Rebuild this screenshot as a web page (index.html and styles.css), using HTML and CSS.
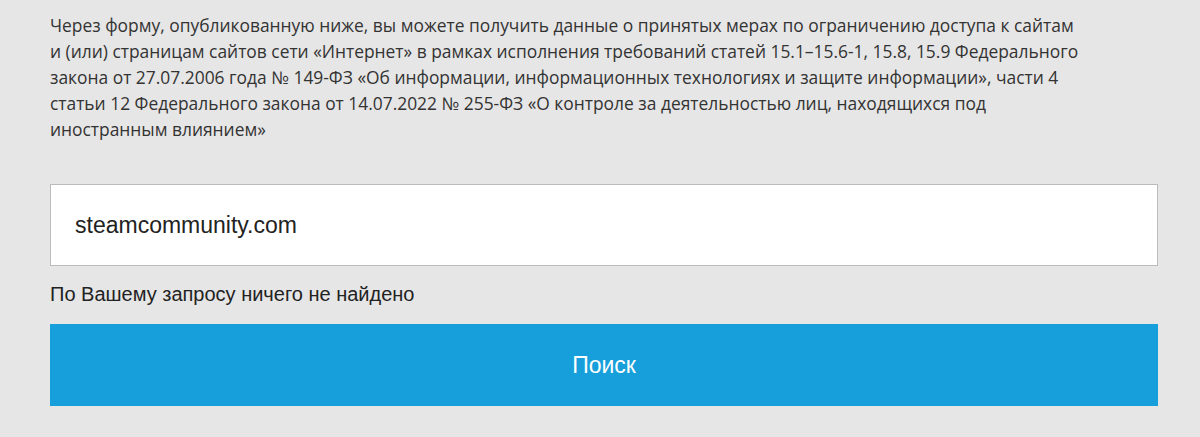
FILE: index.html
```html
<!DOCTYPE html>
<html lang="ru">
<head>
<meta charset="utf-8">
<title>Поиск</title>
<link rel="stylesheet" href="styles.css">
</head>
<body>
<main class="page">
  <p class="intro">Через форму, опубликованную ниже, вы можете получить данные о принятых мерах по ограничению доступа к сайтам и (или) страницам сайтов сети «Интернет» в рамках исполнения требований статей 15.1–15.6-1, 15.8, 15.9 Федерального закона от 27.07.2006 года № 149-ФЗ «Об информации, информационных технологиях и защите информации», части 4 статьи 12 Федерального закона от 14.07.2022 № 255-ФЗ «О контроле за деятельностью лиц, находящихся под иностранным влиянием»</p>
  <form class="search">
    <div class="field">steamcommunity.com</div>
    <div class="message">По Вашему запросу ничего не найдено</div>
    <div class="button">Поиск</div>
  </form>
</main>
</body>
</html>
```

FILE: styles.css
```css
html, body {
  margin: 0;
  padding: 0;
  background: #e6e6e6;
}
.page {
  padding: 12px 42px 0 50px;
  height: 437px;
  box-sizing: border-box;
}
.intro {
  margin: 0;
  max-width: 1038px;
  font-family: "Open Sans", sans-serif;
  font-size: 17.4px;
  line-height: 26px;
  color: #333333;
}
.search {
  margin-top: 42px;
  display: flex;
  flex-direction: column;
}
.field {
  height: 80px;
  border: 1px solid #bcbcbc;
  background: #ffffff;
  display: flex;
  align-items: center;
  padding-left: 24px;
  font-family: "Liberation Sans", Arial, sans-serif;
  font-size: 23px;
  color: #222222;
}
.message {
  margin-top: 17px;
  font-family: "Liberation Sans", Arial, sans-serif;
  font-size: 20px;
  line-height: 22px;
  color: #222222;
}
.button {
  margin-top: 19px;
  height: 82px;
  background: #169fdb;
  display: flex;
  align-items: center;
  justify-content: center;
  font-family: "Liberation Sans", Arial, sans-serif;
  font-size: 23px;
  color: #ffffff;
}
```
